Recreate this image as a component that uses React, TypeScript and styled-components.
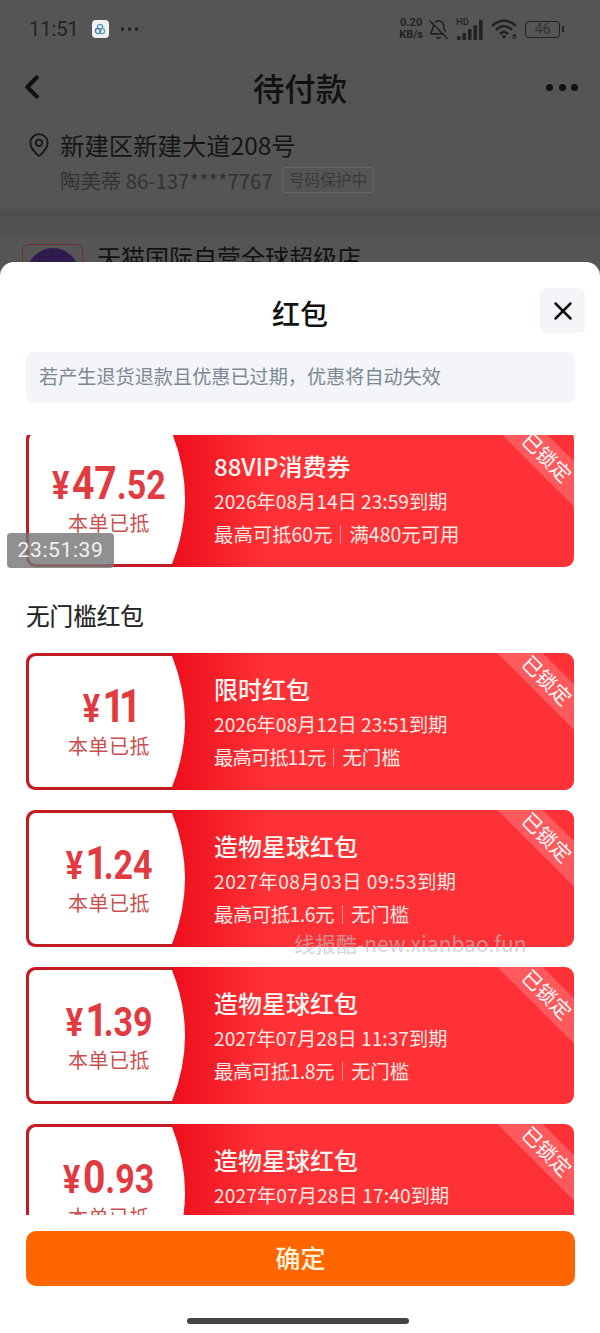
import styled, { createGlobalStyle } from 'styled-components'
import { ChevronLeft, MapPin, BellOff, X } from 'lucide-react'

const GlobalStyle = createGlobalStyle`
  * {
    box-sizing: border-box;
  }

  body {
    margin: 0;
    background: #555;
    font-family: 'Noto Sans CJK SC', 'Noto Sans', sans-serif;
  }
`

const Page = styled.div`
  position: relative;
  display: flex;
  flex-direction: column;
  width: 600px;
  height: 1333px;
  overflow: hidden;
  background: #555;
`

const Backdrop = styled.div`
  flex: none;
  height: 262px;
  overflow: hidden;
`

const StatusBar = styled.div`
  display: flex;
  align-items: center;
  height: 58px;
  padding: 0 40px 0 29px;
  color: #222;
`

const Clock = styled.span`
  font-family: 'Roboto', sans-serif;
  font-size: 20px;
  margin-right: 13px;
`

const AppIcon = styled.div`
  display: flex;
  align-items: center;
  justify-content: center;
  width: 17px;
  height: 18px;
  border-radius: 4px;
  background: #f0f2f4;
  margin-right: 12px;
`

const StatusDots = styled.div`
  flex: 1;
  display: flex;
  gap: 3.5px;

  i {
    width: 3.5px;
    height: 3.5px;
    border-radius: 50%;
    background: #222;
  }
`

const NetSpeed = styled.div`
  font-family: 'Roboto', sans-serif;
  font-size: 11px;
  font-weight: 700;
  line-height: 12px;
  text-align: center;
  margin-right: 5px;
`

const StatusIcons = styled.div`
  display: flex;
  align-items: center;
  gap: 7px;
`

const Battery = styled.div`
  display: flex;
  align-items: center;
  justify-content: center;
  width: 35px;
  height: 17px;
  border: 1.5px solid #222;
  border-radius: 4px;
  font-family: 'Roboto', sans-serif;
  font-size: 14px;
  color: #333;
  position: relative;

  &::after {
    content: '';
    position: absolute;
    right: -5px;
    top: 4px;
    width: 2px;
    height: 6px;
    background: #222;
  }
`

const NavBar = styled.div`
  display: grid;
  grid-template-columns: 1fr auto 1fr;
  align-items: center;
  height: 58px;
  padding: 0 22px;
`

const BackButton = styled.div`
  display: flex;
  margin-left: -9px;
`

const NavTitle = styled.h1`
  margin: 0;
  font-size: 31.4px;
  font-weight: 500;
  color: #111;
`

const MoreDots = styled.div`
  justify-self: end;
  display: flex;
  gap: 5.5px;

  i {
    width: 7px;
    height: 7px;
    border-radius: 50%;
    background: #111;
  }
`

const AddressBlock = styled.div`
  padding: 11px 26px 0;
  height: 93px;
`

const AddressLine = styled.div`
  display: flex;
  align-items: center;
  gap: 8px;
  font-size: 24.4px;
  line-height: 36px;
  color: #151515;
`

const ContactLine = styled.div`
  display: flex;
  align-items: center;
  padding-left: 34px;
  font-size: 20.4px;
  line-height: 34px;
  color: #333;
`

const ProtectTag = styled.span`
  margin-left: 9px;
  padding: 0 6px;
  height: 26px;
  line-height: 24px;
  border: 1px solid #666;
  border-radius: 2px;
  font-size: 15.7px;
  color: #3a3a3a;
`

const Divider = styled.div`
  height: 26px;
  background: linear-gradient(#4e4e4e, #525252);
`

const StoreRow = styled.div`
  display: flex;
  gap: 14px;
  padding: 9px 22px 0;
  font-size: 24px;
  line-height: 26px;
  color: #111;
`

const StoreLogo = styled.div`
  display: flex;
  justify-content: center;
  flex: none;
  width: 61px;
  height: 61px;
  padding-top: 3px;
  border: 1px solid #6e2b30;
  border-radius: 6px;

  i {
    width: 52px;
    height: 52px;
    border-radius: 50%;
    background: #2f1a4d;
  }
`

const Sheet = styled.div`
  display: flex;
  flex-direction: column;
  flex: 1;
  min-height: 0;
  background: #fff;
  border-radius: 14px 14px 0 0;
`

const SheetHeader = styled.div`
  display: grid;
  grid-template-columns: 1fr auto 1fr;
  align-items: center;
  padding: 26px 15px 19px;
`

const SheetTitle = styled.h2`
  grid-column: 2;
  margin: 4px 0 0;
  font-size: 28px;
  font-weight: 500;
  color: #111;
`

const CloseButton = styled.button`
  justify-self: end;
  display: flex;
  align-items: center;
  justify-content: center;
  width: 45px;
  height: 45px;
  padding: 0;
  border: 0;
  border-radius: 6px;
  background: #f3f5f8;
  color: #111;
`

const Notice = styled.div`
  height: 51px;
  margin: 0 25px 0 26px;
  padding-left: 13px;
  line-height: 48px;
  border-radius: 8px;
  background: #f3f5f8;
  font-size: 19.15px;
  color: #7c8894;
`

const CouponScroll = styled.div`
  flex: none;
  height: 780px;
  margin: 32px 26px 0;
  overflow: hidden;
`

const CouponList = styled.div`
  display: flex;
  flex-direction: column;
  gap: 20px;
  margin-top: -5px;
`

const SectionTitle = styled.h3`
  margin: 14px 0 4px;
  font-size: 23.6px;
  line-height: 28px;
  font-weight: 400;
  -webkit-text-stroke: 0.2px #222;
  color: #222;
`

const Card = styled.div`
  position: relative;
  display: flex;
  flex: none;
  height: 137px;
  overflow: hidden;
  border-radius: 9px;
  background: linear-gradient(90deg, #c41a22 0, #c41a22 146px, #ee0f1c 148px, #fe3136 240px);
`

const Left = styled.div`
  flex: none;
  display: flex;
  flex-direction: column;
  align-items: center;
  width: 156px;
  height: 131px;
  margin: 3px 0 3px 3px;
  padding: 26px 0 0 4px;
  border-radius: 7px 0 0 7px;
  background: #fff;
  clip-path: path('M0 0 H143 Q169 65.5 143 131 H0 Z');
`

const Amount = styled.div`
  display: flex;
  align-items: baseline;
  height: 48px;
  line-height: 48px;
  font-family: 'Roboto', sans-serif;
  font-weight: 700;
  white-space: nowrap;
  color: #e13a40;
  transform: scaleX(0.85);
`

const Yen = styled.span`
  font-size: 38px;
  margin-right: 3px;
`

const Int = styled.span<{ $tight: number }>`
  font-size: 46px;
  letter-spacing: ${(p) => p.$tight}px;
`

const Dec = styled.span`
  font-size: 40px;
`

const Used = styled.div`
  margin-top: 2px;
  font-size: 20px;
  line-height: 28px;
  letter-spacing: 0.5px;
  color: #c9504f;
`

const Info = styled.div`
  display: flex;
  flex-direction: column;
  margin-left: 29px;
  padding-top: 18px;
  color: #ffe9e4;
`

const Name = styled.div`
  font-size: 24px;
  line-height: 36px;
  font-weight: 500;
  color: #fff6f2;
`

const Expire = styled.div<{ $spread: number }>`
  font-size: 19.2px;
  line-height: 34px;
  letter-spacing: ${(p) => p.$spread}px;
`

const Rules = styled.div`
  display: flex;
  align-items: center;
  font-size: 19.4px;
  line-height: 32px;
`

const Limit = styled.span<{ $spread: number }>`
  letter-spacing: ${(p) => p.$spread}px;
`

const Sep = styled.i`
  width: 1px;
  height: 19px;
  margin: 0 8px;
  background: rgba(255, 255, 255, 0.5);
`

const Ribbon = styled.div`
  position: absolute;
  top: 11px;
  right: -33px;
  width: 120px;
  height: 32px;
  line-height: 31px;
  text-align: center;
  transform: rotate(45deg);
  background: rgba(255, 255, 255, 0.2);
  font-size: 20px;
  color: #fff;
`

const Confirm = styled.button`
  flex: none;
  height: 55px;
  margin: 16px 25px 0 26px;
  padding: 0 0 4px;
  border: 0;
  border-radius: 10px;
  background: #ff6600;
  font-family: inherit;
  font-size: 25px;
  font-weight: 500;
  color: #fff4dc;
`

const HomeBar = styled.div`
  flex: none;
  width: 222px;
  height: 6px;
  margin: 32px 0 0 187px;
  border-radius: 3px;
  background: #444;
`

const Timestamp = styled.div`
  position: absolute;
  left: 7px;
  top: 533px;
  width: 107px;
  height: 35px;
  border-radius: 4px;
  background: rgba(120, 120, 120, 0.82);
  font-family: 'Roboto', sans-serif;
  font-size: 21px;
  line-height: 35px;
  letter-spacing: 0.6px;
  text-align: center;
  color: #f2f2f2;
`

const Watermark = styled.div`
  position: absolute;
  left: 294px;
  top: 929px;
  font-size: 21px;
  line-height: 28px;
  color: rgba(190, 190, 190, 0.65);
`

type Coupon = {
  int: string
  dec: string
  tight: number
  name: string
  expire: string
  expireSpread: number
  limit: string
  limitSpread: number
  rule: string
}

const vip: Coupon = {
  int: '47',
  dec: '.52',
  tight: 0,
  name: '88VIP消费券',
  expire: '2026年08月14日 23:59到期',
  expireSpread: 0,
  limit: '最高可抵60元',
  limitSpread: 0,
  rule: '满480元可用',
}

const coupons: Coupon[] = [
  { int: '11', dec: '', tight: -7, name: '限时红包', expire: '2026年08月12日 23:51到期', expireSpread: 0, limit: '最高可抵11元', limitSpread: -1, rule: '无门槛' },
  { int: '1', dec: '.24', tight: -5, name: '造物星球红包', expire: '2027年08月03日 09:53到期', expireSpread: 0.48, limit: '最高可抵1.6元', limitSpread: -0.5, rule: '无门槛' },
  { int: '1', dec: '.39', tight: -5, name: '造物星球红包', expire: '2027年07月28日 11:37到期', expireSpread: 0, limit: '最高可抵1.8元', limitSpread: -0.5, rule: '无门槛' },
  { int: '0', dec: '.93', tight: 0, name: '造物星球红包', expire: '2027年07月28日 17:40到期', expireSpread: 0.1, limit: '最高可抵1.2元', limitSpread: -0.5, rule: '无门槛' },
]

const CouponCard = ({ coupon }: { coupon: Coupon }) => (
  <Card>
    <Left>
      <Amount>
        <Yen>¥</Yen>
        <Int $tight={coupon.tight}>{coupon.int}</Int>
        <Dec>{coupon.dec}</Dec>
      </Amount>
      <Used>本单已抵</Used>
    </Left>
    <Info>
      <Name>{coupon.name}</Name>
      <Expire $spread={coupon.expireSpread}>{coupon.expire}</Expire>
      <Rules>
        <Limit $spread={coupon.limitSpread}>{coupon.limit}</Limit>
        <Sep />
        {coupon.rule}
      </Rules>
    </Info>
    <Ribbon>已锁定</Ribbon>
  </Card>
)

const SignalIcon = () => (
  <svg width="28" height="24" viewBox="0 0 28 24" fill="#222">
    <text x="0" y="8" fontSize="9.5" fontWeight="500" fontFamily="Roboto, sans-serif">HD</text>
    <rect x="1" y="19" width="3.6" height="4" rx="1" />
    <rect x="6.5" y="16" width="3.6" height="7" rx="1" />
    <rect x="12" y="12" width="3.6" height="11" rx="1" />
    <rect x="17.5" y="8" width="3.6" height="15" rx="1" />
    <rect x="23" y="3" width="3.6" height="20" rx="1" />
  </svg>
)

const WifiIcon = () => (
  <svg width="27" height="22" viewBox="0 0 27 22" fill="none" stroke="#222" strokeWidth="2.4">
    <path d="M1 8 C8 1 18 1 25 8" />
    <path d="M5 12 C10 7 16 7 21 12" />
    <path d="M9 16 C11.5 13.5 14.5 13.5 17 16" />
    <path d="M11 18 L13 20.5 L15 18 Z" fill="#222" strokeWidth="1" />
    <text x="21" y="21" fontSize="8" fontWeight="700" fill="#222" stroke="none" fontFamily="Roboto, sans-serif">6</text>
  </svg>
)

const App = () => (
  <Page>
    <GlobalStyle />
    <Backdrop>
      <StatusBar>
        <Clock>11:51</Clock>
        <AppIcon>
          <svg width="12" height="12" viewBox="0 0 12 12" fill="none" strokeWidth="1.3">
            <circle cx="6" cy="4" r="2.6" stroke="#4a90c2" />
            <circle cx="4" cy="8" r="2.6" stroke="#5a6fb0" />
            <circle cx="8" cy="8" r="2.6" stroke="#50b0b0" />
          </svg>
        </AppIcon>
        <StatusDots>
          <i />
          <i />
          <i />
        </StatusDots>
        <NetSpeed>
          0.20
          <br />
          KB/s
        </NetSpeed>
        <StatusIcons>
          <BellOff size={21} color="#222" strokeWidth={1.8} />
          <SignalIcon />
          <WifiIcon />
          <Battery>46</Battery>
        </StatusIcons>
      </StatusBar>
      <NavBar>
        <BackButton>
          <ChevronLeft size={38} color="#111" strokeWidth={2.6} />
        </BackButton>
        <NavTitle>待付款</NavTitle>
        <MoreDots>
          <i />
          <i />
          <i />
        </MoreDots>
      </NavBar>
      <AddressBlock>
        <AddressLine>
          <MapPin size={26} color="#151515" strokeWidth={1.7} />
          新建区新建大道208号
        </AddressLine>
        <ContactLine>
          陶美蒂 86-137****7767
          <ProtectTag>号码保护中</ProtectTag>
        </ContactLine>
      </AddressBlock>
      <Divider />
      <StoreRow>
        <StoreLogo>
          <i />
        </StoreLogo>
        天猫国际自营全球超级店
      </StoreRow>
    </Backdrop>
    <Sheet>
      <SheetHeader>
        <SheetTitle>红包</SheetTitle>
        <CloseButton>
          <X size={30} strokeWidth={2} />
        </CloseButton>
      </SheetHeader>
      <Notice>若产生退货退款且优惠已过期，优惠将自动失效</Notice>
      <CouponScroll>
        <CouponList>
          <CouponCard coupon={vip} />
          <SectionTitle>无门槛红包</SectionTitle>
          {coupons.map((coupon) => (
            <CouponCard key={coupon.expire} coupon={coupon} />
          ))}
        </CouponList>
      </CouponScroll>
      <Confirm>确定</Confirm>
      <HomeBar />
    </Sheet>
    <Timestamp>23:51:39</Timestamp>
    <Watermark>线报酷-new.xianbao.fun</Watermark>
  </Page>
)

export default App
